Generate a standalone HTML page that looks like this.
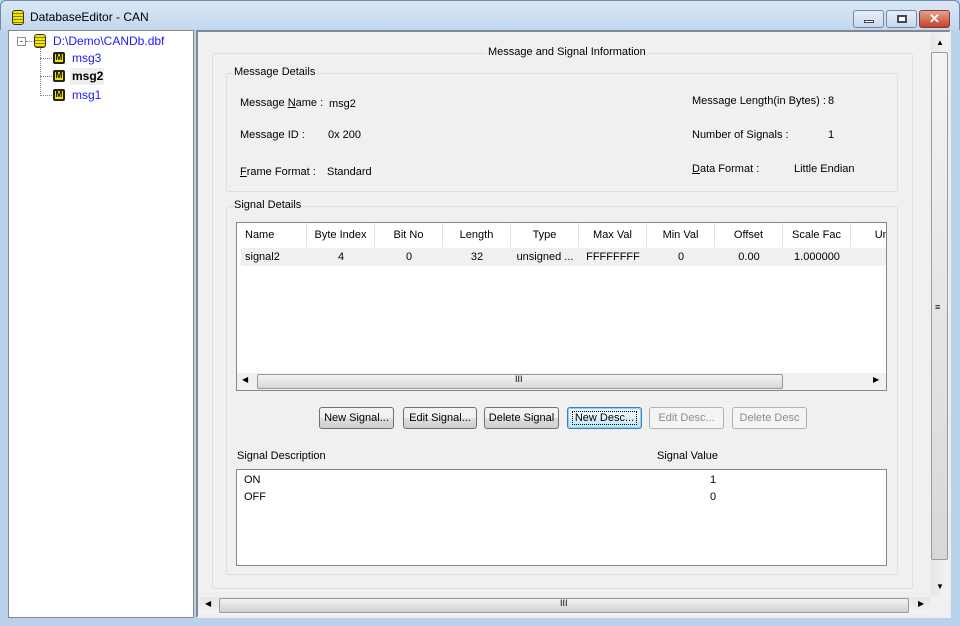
<!DOCTYPE html>
<html><head><style>
*{box-sizing:border-box;margin:0;padding:0}
body{width:960px;height:626px;overflow:hidden;background:#b9d1ea;font-family:"Liberation Sans",sans-serif;font-size:11px;color:#000;position:relative}
.a{position:absolute}
.title{left:0;top:0;width:960px;height:30px;background:linear-gradient(#dbe8f6,#c2d7ee);border:1px solid #6d8bab;border-bottom:none;border-radius:6px 6px 0 0}
.grp{border:1px solid #d5dfe5;border-radius:3px;background:#f0f0f0}
.lbl{background:#f0f0f0;padding:0 2px;white-space:nowrap}
.btn{height:22px;border:1px solid #707070;border-radius:3px;background:linear-gradient(#f2f2f2 50%,#dedede 50%,#cfcfcf);text-align:center;line-height:20px;font-size:11px}
.dis{border-color:#adb2b5;color:#8d8d8d;background:#f4f4f4}
.hdr{top:0;height:24px;line-height:24px;text-align:center;border-right:1px solid #e3e3e3}
.sb{background:linear-gradient(90deg,#e6e6e6,#f4f4f4)}
.th{border:1px solid #9a9a9a;border-radius:2px;background:linear-gradient(#f3f3f3,#d8d8d8)}
.db{background:repeating-linear-gradient(#f5e400 0 2px,#8a7d00 2px 3px);border:1px solid #333;border-radius:3px}
</style></head><body>
<div class="a title"></div>
<div class="a db" style="left:12px;top:10px;width:12px;height:15px"></div>
<div class="a" style="left:30px;top:10px;font-size:12px">DatabaseEditor - CAN</div>
<div class="a" style="left:853px;top:10px;width:31px;height:18px;border:1px solid #6d8bab;border-radius:3px;background:linear-gradient(#e6eef8,#c7d8ec)"><div class="a" style="left:10px;top:9px;width:10px;height:3px;background:#fff;border:1px solid #445"></div></div>
<div class="a" style="left:886px;top:10px;width:31px;height:18px;border:1px solid #6d8bab;border-radius:3px;background:linear-gradient(#e6eef8,#c7d8ec)"><div class="a" style="left:10px;top:4px;width:10px;height:8px;border:2px solid #445;background:#fff"></div></div>
<div class="a" style="left:919px;top:10px;width:31px;height:18px;border:1px solid #8a3a30;border-radius:3px;background:linear-gradient(#e8a190,#c4402e);color:#fff;font-weight:bold;font-size:13px;text-align:center;line-height:16px">✕</div>

<!-- tree -->
<div class="a" style="left:8px;top:30px;width:186px;height:588px;background:#fff;border:1px solid #828790"></div>
<div class="a" style="left:17px;top:37px;width:9px;height:9px;border:1px solid #919191;font-size:9px;line-height:6px;text-align:center;background:#fff">-</div>
<div class="a" style="left:26px;top:41px;width:8px;border-top:1px dotted #888"></div>
<div class="a" style="left:40px;top:48px;height:48px;border-left:1px dotted #888"></div>
<div class="a" style="left:40px;top:58px;width:12px;border-top:1px dotted #888"></div>
<div class="a" style="left:40px;top:76px;width:12px;border-top:1px dotted #888"></div>
<div class="a" style="left:40px;top:95px;width:12px;border-top:1px dotted #888"></div>
<div class="a db" style="left:34px;top:34px;width:12px;height:14px"></div>
<div class="a" style="left:53px;top:34px;color:#1a1aff;font-size:12px">D:\Demo\CANDb.dbf</div>
<div class="a" style="left:53px;top:52px;width:12px;height:12px;background:#f5e400;border:2px solid #222;border-radius:2px;font-size:8px;font-weight:bold;text-align:center;line-height:8px">M</div>
<div class="a" style="left:72px;top:51px;color:#1a1aff;font-size:12px">msg3</div>
<div class="a" style="left:53px;top:70px;width:12px;height:12px;background:#f5e400;border:2px solid #222;border-radius:2px;font-size:8px;font-weight:bold;text-align:center;line-height:8px">M</div>
<div class="a" style="left:70px;top:68px;width:34px;height:17px;background:#eee"></div>
<div class="a" style="left:72px;top:69px;font-weight:bold;font-size:12px">msg2</div>
<div class="a" style="left:53px;top:89px;width:12px;height:12px;background:#f5e400;border:2px solid #222;border-radius:2px;font-size:8px;font-weight:bold;text-align:center;line-height:8px">M</div>
<div class="a" style="left:72px;top:88px;color:#1a1aff;font-size:12px">msg1</div>

<!-- right panel -->
<div class="a" style="left:196px;top:30px;width:755px;height:588px;background:#f0f0f0;border:2px solid #828790;border-right-color:#eee;border-bottom-color:#eee"></div>
<div class="a sb" style="left:931px;top:33px;width:17px;height:563px"></div>
<div class="a" style="left:936px;top:38px;font-size:8px">▲</div>
<div class="a th" style="left:931px;top:52px;width:17px;height:508px"></div>
<div class="a" style="left:935px;top:302px;font-size:9px">≡</div>
<div class="a" style="left:936px;top:582px;font-size:8px">▼</div>
<div class="a sb" style="left:199px;top:597px;width:732px;height:17px;background:linear-gradient(#e6e6e6,#f4f4f4)"></div>
<div class="a" style="left:205px;top:599px;font-size:8px">◀</div>
<div class="a th" style="left:219px;top:598px;width:690px;height:15px;background:linear-gradient(#f3f3f3,#d0d0d0)"></div>
<div class="a" style="left:560px;top:598px;font-size:9px">III</div>
<div class="a" style="left:918px;top:599px;font-size:8px">▶</div>

<div class="a grp" style="left:212px;top:53px;width:701px;height:536px"></div>
<div class="a lbl" style="left:486px;top:46px">Message and Signal Information</div>

<div class="a grp" style="left:226px;top:73px;width:672px;height:119px"></div>
<div class="a lbl" style="left:232px;top:66px">Message Details</div>
<div class="a" style="left:240px;top:97px">Message <u>N</u>ame :</div>
<div class="a" style="left:329px;top:98px">msg2</div>
<div class="a" style="left:240px;top:129px">Message ID :</div>
<div class="a" style="left:328px;top:129px">0x 200</div>
<div class="a" style="left:240px;top:166px"><u>F</u>rame Format :</div>
<div class="a" style="left:327px;top:166px">Standard</div>
<div class="a" style="left:692px;top:95px">Message Length(in Bytes) :</div>
<div class="a" style="left:828px;top:95px">8</div>
<div class="a" style="left:692px;top:129px">Number of Signals :</div>
<div class="a" style="left:828px;top:129px">1</div>
<div class="a" style="left:692px;top:163px"><u>D</u>ata Format :</div>
<div class="a" style="left:794px;top:163px">Little Endian</div>

<div class="a grp" style="left:226px;top:206px;width:672px;height:369px"></div>
<div class="a lbl" style="left:232px;top:199px">Signal Details</div>

<div class="a" style="left:236px;top:222px;width:651px;height:169px;background:#fff;border:1px solid #828790;overflow:hidden">
 <div class="a hdr" style="left:0;width:70px;text-align:left;padding-left:8px">Name</div>
 <div class="a hdr" style="left:70px;width:68px">Byte Index</div>
 <div class="a hdr" style="left:138px;width:68px">Bit No</div>
 <div class="a hdr" style="left:206px;width:68px">Length</div>
 <div class="a hdr" style="left:274px;width:68px">Type</div>
 <div class="a hdr" style="left:342px;width:68px">Max Val</div>
 <div class="a hdr" style="left:410px;width:68px">Min Val</div>
 <div class="a hdr" style="left:478px;width:68px">Offset</div>
 <div class="a hdr" style="left:546px;width:68px">Scale Fac</div>
 <div class="a hdr" style="left:614px;width:68px">Unit</div>
 <div class="a" style="left:4px;top:25px;width:645px;height:18px;background:#f0f0f0"></div>
 <div class="a" style="left:8px;top:28px">signal2</div>
 <div class="a" style="left:70px;top:28px;width:68px;text-align:center">4</div>
 <div class="a" style="left:138px;top:28px;width:68px;text-align:center">0</div>
 <div class="a" style="left:206px;top:28px;width:68px;text-align:center">32</div>
 <div class="a" style="left:274px;top:28px;width:68px;text-align:center">unsigned ...</div>
 <div class="a" style="left:342px;top:28px;width:68px;text-align:center">FFFFFFFF</div>
 <div class="a" style="left:410px;top:28px;width:68px;text-align:center">0</div>
 <div class="a" style="left:478px;top:28px;width:68px;text-align:center">0.00</div>
 <div class="a" style="left:546px;top:28px;width:68px;text-align:center">1.000000</div>
 <div class="a" style="left:0;top:150px;width:649px;height:17px;background:#f0f0f0"></div>
 <div class="a" style="left:5px;top:152px;font-size:8px">◀</div>
 <div class="a th" style="left:20px;top:151px;width:526px;height:15px"></div>
 <div class="a" style="left:278px;top:151px;font-size:9px">III</div>
 <div class="a" style="left:636px;top:152px;font-size:8px">▶</div>
</div>

<div class="a btn" style="left:319px;top:407px;width:75px">New Signal...</div>
<div class="a btn" style="left:403px;top:407px;width:74px">Edit Signal...</div>
<div class="a btn" style="left:484px;top:407px;width:75px">Delete Signal</div>
<div class="a btn" style="left:567px;top:407px;width:75px;border-color:#3c7fb1;box-shadow:inset 0 0 0 1px #8ed2f5;background:linear-gradient(#eaf6fd 50%,#d9f0fc 50%,#bee6fd)"><span style="border:1px dotted #000;padding:0 2px">New Desc...</span></div>
<div class="a btn dis" style="left:649px;top:407px;width:75px">Edit Desc...</div>
<div class="a btn dis" style="left:732px;top:407px;width:75px">Delete Desc</div>

<div class="a" style="left:237px;top:450px">Signal Description</div>
<div class="a" style="left:657px;top:450px">Signal Value</div>
<div class="a" style="left:236px;top:469px;width:651px;height:97px;background:#fff;border:1px solid #828790"></div>
<div class="a" style="left:244px;top:474px">ON</div>
<div class="a" style="left:710px;top:474px">1</div>
<div class="a" style="left:244px;top:491px">OFF</div>
<div class="a" style="left:710px;top:491px">0</div>
</body></html>
